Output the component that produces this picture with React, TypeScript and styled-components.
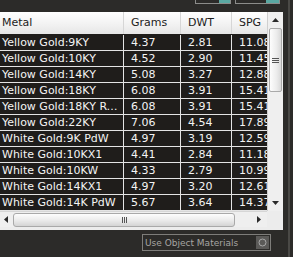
import React from 'react';
import styled, { createGlobalStyle } from 'styled-components';

const Global = createGlobalStyle`
  html, body { margin: 0; padding: 0; background: #2c2b29; }
  body { font-family: "DejaVu Sans", Verdana, sans-serif; }
`;

const Screen = styled.div`
  width: 293px;
  height: 257px;
  background: #2c2b29;
  display: flex;
  overflow: hidden;
`;

const Main = styled.div`
  width: 288px;
  display: flex;
  flex-direction: column;
`;

const Edge = styled.div`
  width: 2px;
  background: #4a4946;
`;

const TopBar = styled.div`
  height: 12px;
  display: flex;
  align-items: flex-start;
  padding-left: 195px;
  gap: 4px;
`;

const Spin = styled.div<{ $w: number; $t: number }>`
  width: ${p => p.$w}px;
  height: 4px;
  box-sizing: border-box;
  border: 1px solid #8c8c8a;
  border-top: none;
  display: flex;
  justify-content: flex-end;
  &::after {
    content: '';
    width: ${p => p.$t}px;
    background: #5aa8a2;
  }
`;

const Panel = styled.div`
  width: 283px;
  height: 218px;
  box-sizing: border-box;
  padding-bottom: 3px;
  background: #ececec;
  display: grid;
  grid-template-columns: 267px 16px;
  grid-template-rows: 199px 16px;
`;

const Viewport = styled.div`
  overflow: hidden;
  background: #1f1d1b;
`;

const COLS = '124px 57px 51px 64px';

const HeaderRow = styled.div`
  display: grid;
  grid-template-columns: ${COLS};
  height: 23px;
  box-sizing: border-box;
  border-bottom: 1px solid #1f1d1b;
  background: linear-gradient(#ffffff, #f1f1f1 60%, #e6e6e6);
`;

const HeadCell = styled.div<{ $first?: boolean }>`
  border-right: 1px solid #d6d6d6;
  padding-left: ${p => (p.$first ? 2 : 7)}px;
  font-size: 11px;
  line-height: 22px;
  color: #1c1c1c;
  white-space: nowrap;
  overflow: hidden;
`;

const Row = styled.div`
  display: grid;
  grid-template-columns: ${COLS};
  height: 16px;
  box-sizing: border-box;
  border-bottom: 1px solid #e4e4e4;
`;

const Cell = styled.div<{ $first?: boolean }>`
  border-right: 1px solid #e4e4e4;
  padding-left: ${p => (p.$first ? 2 : 7)}px;
  padding-right: 2px;
  font-size: 11px;
  line-height: 15px;
  color: #f4f4f4;
  white-space: nowrap;
  overflow: hidden;
  text-overflow: ellipsis;
`;

const VScroll = styled.div`
  background: #efefef;
  border-left: 1px solid #cfcfcf;
  display: flex;
  flex-direction: column;
  align-items: center;
`;

const ArrowBox = styled.div<{ $h?: number; $w?: number }>`
  height: ${p => p.$h ?? 16}px;
  width: ${p => p.$w ?? 15}px;
  display: flex;
  align-items: center;
  justify-content: center;
  flex-shrink: 0;
`;

const VThumb = styled.div`
  width: 13px;
  height: 64px;
  box-sizing: border-box;
  border: 1px solid #a9a9a9;
  border-radius: 2px;
  background: linear-gradient(90deg, #fdfdfd, #ececec 60%, #d9d9d9);
  display: flex;
  flex-direction: column;
  align-items: center;
  justify-content: center;
  gap: 1px;
`;

const HGripLine = styled.div`
  width: 7px;
  height: 1px;
  background: #555;
`;

const VTrack = styled.div`
  flex: 1;
`;

const HScroll = styled.div`
  background: #efefef;
  border-top: 1px solid #d6d6d6;
  display: flex;
  align-items: center;
`;

const HThumb = styled.div`
  width: 222px;
  height: 14px;
  box-sizing: border-box;
  margin-left: 1px;
  border: 1px solid #a9a9a9;
  border-radius: 3px;
  background: linear-gradient(#fdfdfd, #ececec 50%, #d4d4d4);
  display: flex;
  align-items: center;
  justify-content: center;
  gap: 1px;
`;

const VGripLine = styled.div`
  width: 1px;
  height: 6px;
  background: #555;
`;

const HTrack = styled.div`
  flex: 1;
`;

const Corner = styled.div`
  background: #ececec;
`;

const Bottom = styled.div`
  display: flex;
  padding-left: 142px;
  padding-top: 4px;
`;

const Toggle = styled.div`
  width: 129px;
  height: 17px;
  box-sizing: border-box;
  border: 1px solid #7e7d7a;
  display: flex;
  align-items: center;
  justify-content: space-between;
  padding-left: 2px;
  padding-right: 1px;
`;

const ToggleLabel = styled.span`
  font-family: "DejaVu Sans", Verdana, sans-serif;
  font-size: 9px;
  color: #a6a5a2;
  white-space: nowrap;
`;

const ToggleBtn = styled.div`
  width: 13px;
  height: 13px;
  background: #5b5a58;
  display: flex;
  align-items: center;
  justify-content: center;
`;

const Tri = ({ dir }: { dir: 'up' | 'down' | 'left' | 'right' }) => {
  const pts = {
    up: '0,4 3.5,0 7,4',
    down: '0,0 7,0 3.5,4',
    left: '4,0 4,7 0,3.5',
    right: '0,0 4,3.5 0,7',
  }[dir];
  const vert = dir === 'up' || dir === 'down';
  return (
    <svg width={vert ? 7 : 4} height={vert ? 4 : 7} viewBox={vert ? '0 0 7 4' : '0 0 4 7'}>
      <polygon points={pts} fill="#2a2a2a" />
    </svg>
  );
};

const rows: [string, string, string, string][] = [
  ['Yellow Gold:9KY', '4.37', '2.81', '11.08'],
  ['Yellow Gold:10KY', '4.52', '2.90', '11.45'],
  ['Yellow Gold:14KY', '5.08', '3.27', '12.88'],
  ['Yellow Gold:18KY', '6.08', '3.91', '15.41'],
  ['Yellow Gold:18KY Rose', '6.08', '3.91', '15.41'],
  ['Yellow Gold:22KY', '7.06', '4.54', '17.89'],
  ['White Gold:9K PdW', '4.97', '3.19', '12.59'],
  ['White Gold:10KX1', '4.41', '2.84', '11.18'],
  ['White Gold:10KW', '4.33', '2.79', '10.99'],
  ['White Gold:14KX1', '4.97', '3.20', '12.61'],
  ['White Gold:14K PdW', '5.67', '3.64', '14.37'],
];

export default function App() {
  return (
    <>
      <Global />
      <Screen>
        <Main>
          <TopBar>
            <Spin $w={36} $t={11} />
            <Spin $w={45} $t={13} />
          </TopBar>
          <Panel>
            <Viewport>
              <HeaderRow>
                <HeadCell $first>Metal</HeadCell>
                <HeadCell>Grams</HeadCell>
                <HeadCell>DWT</HeadCell>
                <HeadCell>SPG</HeadCell>
              </HeaderRow>
              {rows.map(r => (
                <Row key={r[0]}>
                  <Cell $first>{r[0]}</Cell>
                  <Cell>{r[1]}</Cell>
                  <Cell>{r[2]}</Cell>
                  <Cell>{r[3]}</Cell>
                </Row>
              ))}
            </Viewport>
            <VScroll>
              <ArrowBox><Tri dir="up" /></ArrowBox>
              <VThumb>
                <HGripLine />
                <HGripLine />
                <HGripLine />
              </VThumb>
              <VTrack />
              <ArrowBox><Tri dir="down" /></ArrowBox>
            </VScroll>
            <HScroll>
              <ArrowBox $w={12}><Tri dir="left" /></ArrowBox>
              <HThumb>
                <VGripLine />
                <VGripLine />
                <VGripLine />
              </HThumb>
              <HTrack />
              <ArrowBox $w={16}><Tri dir="right" /></ArrowBox>
            </HScroll>
            <Corner />
          </Panel>
          <Bottom>
            <Toggle>
              <ToggleLabel>Use Object Materials</ToggleLabel>
              <ToggleBtn>
                <svg width="9" height="9" viewBox="0 0 9 9">
                  <circle cx="4.5" cy="4.5" r="3.5" fill="none" stroke="#a8a8a8" strokeWidth="1" />
                </svg>
              </ToggleBtn>
            </Toggle>
          </Bottom>
        </Main>
        <Edge />
      </Screen>
    </>
  );
}
